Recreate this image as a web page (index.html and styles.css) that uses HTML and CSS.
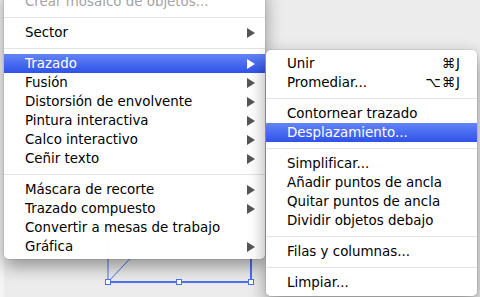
FILE: index.html
```html
<!DOCTYPE html>
<html lang="es">
<head>
<meta charset="utf-8">
<link rel="stylesheet" href="styles.css">
</head>
<body>
<div class="stage">
  <svg class="artwork" width="480" height="297" viewBox="0 0 480 297">
    <line x1="108" y1="240" x2="108" y2="282" class="edge"/>
    <line x1="251" y1="240" x2="251" y2="282" class="edge thick"/>
    <line x1="108" y1="282" x2="251" y2="282" class="edge thick"/>
    <line x1="108" y1="282" x2="140" y2="248" class="edge"/>
    <rect x="105.5" y="279.5" width="5" height="5" class="handle"/>
    <rect x="176.5" y="279.5" width="5" height="5" class="handle"/>
    <rect x="248.5" y="279.5" width="5" height="5" class="handle"/>
  </svg>

  <div class="menu main-menu">
    <div class="item disabled"><span class="label">Crear mosaico de objetos...</span></div>
    <div class="sep"></div>
    <div class="item"><span class="label">Sector</span><span class="arrow"></span></div>
    <div class="sep"></div>
    <div class="item active"><span class="label">Trazado</span><span class="arrow"></span></div>
    <div class="item"><span class="label">Fusión</span><span class="arrow"></span></div>
    <div class="item"><span class="label">Distorsión de envolvente</span><span class="arrow"></span></div>
    <div class="item"><span class="label">Pintura interactiva</span><span class="arrow"></span></div>
    <div class="item"><span class="label">Calco interactivo</span><span class="arrow"></span></div>
    <div class="item"><span class="label">Ceñir texto</span><span class="arrow"></span></div>
    <div class="sep"></div>
    <div class="item"><span class="label">Máscara de recorte</span><span class="arrow"></span></div>
    <div class="item"><span class="label">Trazado compuesto</span><span class="arrow"></span></div>
    <div class="item"><span class="label">Convertir a mesas de trabajo</span></div>
    <div class="item"><span class="label">Gráfica</span><span class="arrow"></span></div>
  </div>

  <div class="menu sub-menu">
    <div class="item"><span class="label">Unir</span><span class="shortcut">⌘J</span></div>
    <div class="item"><span class="label">Promediar...</span><span class="shortcut">⌥⌘J</span></div>
    <div class="sep"></div>
    <div class="item"><span class="label">Contornear trazado</span></div>
    <div class="item active"><span class="label">Desplazamiento...</span></div>
    <div class="sep"></div>
    <div class="item"><span class="label">Simplificar...</span></div>
    <div class="item"><span class="label">Añadir puntos de ancla</span></div>
    <div class="item"><span class="label">Quitar puntos de ancla</span></div>
    <div class="item"><span class="label">Dividir objetos debajo</span></div>
    <div class="sep"></div>
    <div class="item"><span class="label">Filas y columnas...</span></div>
    <div class="sep"></div>
    <div class="item"><span class="label">Limpiar...</span></div>
  </div>
</div>
</body>
</html>
```
FILE: styles.css
```css
html, body {
  margin: 0;
  padding: 0;
}
body {
  width: 480px;
  height: 297px;
  overflow: hidden;
  background: #ececec;
  font-family: "DejaVu Sans", "Liberation Sans", sans-serif;
  font-size: 13.4px;
  color: #000;
}
.stage {
  position: relative;
  width: 480px;
  height: 297px;
  background: linear-gradient(to right, #f4f4f4 0, #f4f4f4 4px, #ececec 4px);
}
.artwork {
  position: absolute;
  left: 0;
  top: 0;
}
.edge {
  stroke: #4d70f2;
  stroke-width: 1;
}
.edge.thick {
  stroke-width: 2;
}
.handle {
  fill: #fff;
  stroke: #4d70f2;
  stroke-width: 1;
}
.menu {
  position: absolute;
  background: rgba(255, 255, 255, 0.98);
  box-shadow: 0 7px 18px rgba(0, 0, 0, 0.4), 0 0 0 1px rgba(0, 0, 0, 0.06);
}
.main-menu {
  left: 4px;
  top: -12px;
  width: 261px;
  padding: 4px 0 3px;
  border-radius: 0 0 5px 5px;
}
.sub-menu {
  left: 266px;
  top: 50px;
  width: 211px;
  padding: 4px 0;
  border-radius: 5px;
}
.item {
  height: 19px;
  display: flex;
  align-items: center;
  justify-content: space-between;
  padding: 0 10px 0 21px;
  white-space: nowrap;
}
.sub-menu .item {
  padding-right: 16px;
}
.item.disabled {
  color: #a3a3a3;
}
.item.active {
  color: #fff;
  background: linear-gradient(#6384f5, #2f52ea);
}
.arrow {
  width: 0;
  height: 0;
  border-top: 5px solid transparent;
  border-bottom: 5px solid transparent;
  border-left: 8px solid #555;
}
.item.active .arrow {
  border-left-color: #fff;
}
.shortcut {
  letter-spacing: 1px;
}
.sep {
  height: 12px;
  display: flex;
  align-items: center;
}
.sep::before {
  content: "";
  display: block;
  width: 100%;
  height: 1px;
  background: #e3e3e3;
}
```
